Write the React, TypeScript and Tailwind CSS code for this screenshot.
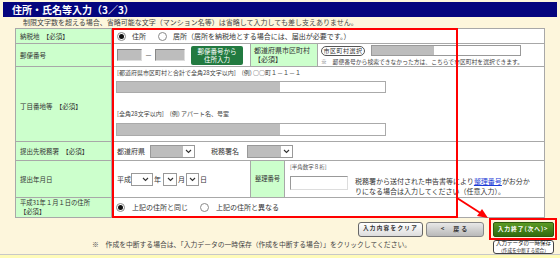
import React from "react";

function Radio({ checked }: { checked?: boolean }) {
  return (
    <span className="flex h-[9px] w-[9px] shrink-0 items-center justify-center rounded-full border border-[#8a8a8a] bg-white">
      {checked && <span className="h-[5px] w-[5px] rounded-full bg-[#111]" />}
    </span>
  );
}

function Chevron() {
  return (
    <svg width="7" height="5" viewBox="0 0 7 5">
      <path d="M1 1 L3.5 3.5 L6 1" fill="none" stroke="#333" strokeWidth="1.1" />
    </svg>
  );
}

export default function App() {
  return (
    <div className="relative flex h-[258px] w-[560px] flex-col overflow-hidden whitespace-nowrap bg-[#fdf6dc] leading-none text-[#333] [font-family:'Noto_Sans_CJK_JP','Noto_Sans',sans-serif]">
      {/* title */}
      <div className="mx-[3px] mt-[2px] flex h-[15px] items-center bg-[#05057e] pl-[9px] text-[10px] font-bold text-white">
        住所・氏名等入力（3／3）
      </div>
      <div className="flex h-[11px] items-center pl-[23px] text-[7px] text-[#444]">
        制限文字数を超える場合、省略可能な文字（マンション名等）は省略して入力しても差し支えありません。
      </div>

      {/* table */}
      <div className="ml-[15px] w-[530px] border border-[#a8a8a8] bg-white">
        {/* row 1 */}
        <div className="flex h-[15px] border-b border-[#a8a8a8]">
          <div className="flex w-[96px] shrink-0 items-center border-r border-[#a8a8a8] bg-[#ccffcc] pl-[4px] text-[6.5px]">
            納税地　【必須】
          </div>
          <div className="flex flex-1 items-center pl-[5px] text-[7px]">
            <Radio checked />
            <span className="ml-[6px]">住所</span>
            <span className="ml-[12px]">
              <Radio />
            </span>
            <span className="ml-[6px]">居所（居所を納税地とする場合には、届出が必要です。）</span>
          </div>
        </div>

        {/* row 2 */}
        <div className="flex h-[23px] border-b border-[#a8a8a8]">
          <div className="flex w-[96px] shrink-0 items-center border-r border-[#a8a8a8] bg-[#ccffcc] pl-[4px] text-[6.5px]">
            郵便番号
          </div>
          <div className="flex flex-1 items-center pl-[5px]">
            <div className="h-[12px] w-[25px] border border-[#888] border-b-[#ddd] border-r-[#ddd] bg-[#bdbdbd]" />
            <span className="w-[13px] text-center text-[7px]">－</span>
            <div className="h-[12px] w-[30px] border border-[#888] border-b-[#ddd] border-r-[#ddd] bg-[#bdbdbd]" />
            <div className="ml-[6px] flex h-[19px] w-[52px] flex-col items-center justify-center gap-[2px] rounded-[2px] bg-[#227a40] text-[6.5px] text-white">
              <span>郵便番号から</span>
              <span>住所入力</span>
            </div>
            <div className="ml-[7px] flex w-[68px] flex-col justify-center gap-[2px] self-stretch border-x border-[#a8a8a8] bg-[#ccffcc] pl-[3px] text-[7px]">
              <span>都道府県市区町村</span>
              <span>【必須】</span>
            </div>
            <div className="flex flex-col pl-[3px]">
              <div className="flex items-center">
                <div className="flex h-[10px] w-[44px] items-center justify-center rounded-full border border-[#555] bg-white text-[6px] tracking-[0.5px]">
                  市区町村選択
                </div>
                <div className="ml-[6px] flex h-[11px] w-[150px] border border-[#999] bg-white">
                  <div className="h-full w-[62px] bg-[#bdbdbd]" />
                </div>
              </div>
              <div className="mt-[3px] text-[5.8px] text-[#444]">
                ※　郵便番号から検索できなかった方は、こちらで市区町村を選択できます。
              </div>
            </div>
          </div>
        </div>

        {/* row 3 */}
        <div className="flex h-[75px] border-b border-[#a8a8a8]">
          <div className="flex w-[96px] shrink-0 items-center border-r border-[#a8a8a8] bg-[#ccffcc] pl-[4px] pt-[4px] text-[6.5px]">
            丁目番地等　【必須】
          </div>
          <div className="flex flex-1 flex-col pl-[4px] pt-[2px] text-[6px] text-[#444]">
            <div className="flex h-[8px] items-center pl-[1px]">
              [都道府県市区町村と合計で全角28文字以内]　(例) ○○町１－１－１
            </div>
            <div className="mt-[4px] flex h-[12px] w-[270px] border border-[#aaa] bg-white">
              <div className="h-full w-[163px] bg-[#bdbdbd]" />
            </div>
            <div className="mt-[17px] flex h-[8px] items-center pl-[1px]">
              [全角28文字以内]　(例) アパート名、号室
            </div>
            <div className="mt-[5px] flex h-[13px] w-[270px] border border-[#aaa] bg-white">
              <div className="h-full w-[163px] bg-[#bdbdbd]" />
            </div>
          </div>
        </div>

        {/* row 4 */}
        <div className="flex h-[19px] border-b border-[#a8a8a8]">
          <div className="flex w-[96px] shrink-0 items-center border-r border-[#a8a8a8] bg-[#ccffcc] pl-[4px] text-[6.5px]">
            提出先税務署　【必須】
          </div>
          <div className="flex flex-1 items-center pl-[5px] text-[7px]">
            <span>都道府県</span>
            <div className="ml-[5px] flex h-[13px] w-[45px] items-center border border-[#999] bg-white">
              <div className="h-full w-[32px] bg-[#bdbdbd]" />
              <div className="flex flex-1 justify-center">
                <Chevron />
              </div>
            </div>
            <span className="ml-[16px]">税務署名</span>
            <div className="ml-[8px] flex h-[13px] w-[46px] items-center border border-[#999] bg-white">
              <div className="h-full w-[33px] bg-[#bdbdbd]" />
              <div className="flex flex-1 justify-center">
                <Chevron />
              </div>
            </div>
          </div>
        </div>

        {/* row 5 */}
        <div className="flex h-[37px] border-b border-[#a8a8a8]">
          <div className="flex w-[96px] shrink-0 items-center border-r border-[#a8a8a8] bg-[#ccffcc] pl-[4px] text-[6.5px]">
            提出年月日
          </div>
          <div className="flex flex-1">
            <div className="flex w-[138px] shrink-0 items-center pl-[5px] text-[7px]">
              <span className="shrink-0">平成</span>
              <div className="flex h-[13px] w-[22px] shrink-0 items-center justify-end border border-[#999] bg-white pr-[3px]">
                <Chevron />
              </div>
              <span className="ml-[1px] shrink-0">年</span>
              <div className="ml-[2px] flex h-[13px] w-[14px] shrink-0 items-center justify-center border border-[#999] bg-white">
                <Chevron />
              </div>
              <span className="ml-[1px] shrink-0">月</span>
              <div className="ml-[1px] flex h-[13px] w-[13px] shrink-0 items-center justify-center border border-[#999] bg-white">
                <Chevron />
              </div>
              <span className="ml-[1px] shrink-0">日</span>
            </div>
            <div className="flex w-[35px] shrink-0 items-center justify-center border-x border-[#a8a8a8] bg-[#ccffcc] text-[6.3px]">
              整理番号
            </div>
            <div className="flex flex-1 pl-[5px]">
              <div className="flex flex-col pt-[4px]">
                <span className="text-[5.5px] text-[#555]">[半角数字８桁]</span>
                <div className="mt-[5px] h-[14px] w-[58px] border border-[#999] border-b-[#ddd] border-r-[#ddd] bg-white" />
              </div>
              <div className="ml-[7px] flex flex-col pt-[15px] text-[7px]">
                <div className="flex h-[10px] items-center">
                  <span>税務署から送付された申告書等により</span>
                  <span className="text-[#1a3bd6] underline">整理番号</span>
                  <span>がお分か</span>
                </div>
                <div className="flex h-[10px] items-center">りになる場合は入力してください（任意入力）。</div>
              </div>
            </div>
          </div>
        </div>

        {/* row 6 */}
        <div className="flex h-[19px]">
          <div className="flex w-[96px] shrink-0 flex-col justify-center gap-[2px] border-r border-[#a8a8a8] bg-[#ccffcc] pl-[4px] text-[6.3px]">
            <span>平成31年１月１日の住所</span>
            <span>【必須】</span>
          </div>
          <div className="flex flex-1 items-center pl-[4px] text-[7px]">
            <Radio checked />
            <span className="ml-[7px]">上記の住所と同じ</span>
            <span className="ml-[12px]">
              <Radio />
            </span>
            <span className="ml-[7px]">上記の住所と異なる</span>
          </div>
        </div>
      </div>

      {/* buttons */}
      <div className="flex h-[22px] items-center justify-end pr-[3px]">
        <div className="flex h-[15px] w-[65px] items-center justify-center rounded-[3px] border border-[#666] bg-gradient-to-b from-[#ffffff] to-[#dcdcdc] text-[5.6px] font-bold tracking-[1.3px] text-[#333]">
          入力内容をクリア
        </div>
        <div className="ml-[3px] flex h-[15px] w-[58px] items-center justify-center rounded-[3px] border border-[#888] bg-gradient-to-b from-[#e8e8e8] to-[#b9b9b9] text-[6px] font-bold text-[#333]">
          <span>&lt;</span>
          <span className="ml-[9px] tracking-[2px]">戻る</span>
        </div>
        <div className="ml-[5px] flex h-[22px] w-[68px] items-center justify-center border-2 border-[#ff0000]">
          <div className="flex h-[15px] w-[61px] items-center justify-center rounded-[2px] border border-[#2d5a0c] bg-gradient-to-b from-[#5c9a24] to-[#2f6b0e] text-[5.8px] font-bold tracking-[0.9px] text-white">
            入力終了(次へ)&gt;
          </div>
        </div>
      </div>
      <div className="flex items-start justify-between">
        <span className="ml-[92px] mt-[1px] text-[6.8px] text-[#444]">
          ※　作成を中断する場合は、「入力データの一時保存（作成を中断する場合）」をクリックしてください。
        </span>
        <div className="mr-[6px] flex h-[14px] w-[61px] flex-col items-center justify-center gap-[1px] rounded-[3px] border border-[#444] bg-white text-[#222]">
          <span className="text-[5.5px]">入力データの一時保存</span>
          <span className="text-[4.6px]">（作成を中断する場合）</span>
        </div>
      </div>
      <div className="mt-auto h-[4px] border-t border-[#c8c8c8] bg-[#fffbb8]" />

      {/* annotation overlays */}
      <div className="pointer-events-none absolute left-[112px] top-[28px] h-[190px] w-[346px] border-2 border-[#ff0000]" />
      <svg className="pointer-events-none absolute left-[450px] top-[190px]" width="45" height="32" viewBox="0 0 45 32">
        <line x1="7" y1="8" x2="32" y2="24" stroke="#ff0000" strokeWidth="2" />
        <polygon points="38,28 27,26 32,19" fill="#ff0000" />
      </svg>
    </div>
  );
}
